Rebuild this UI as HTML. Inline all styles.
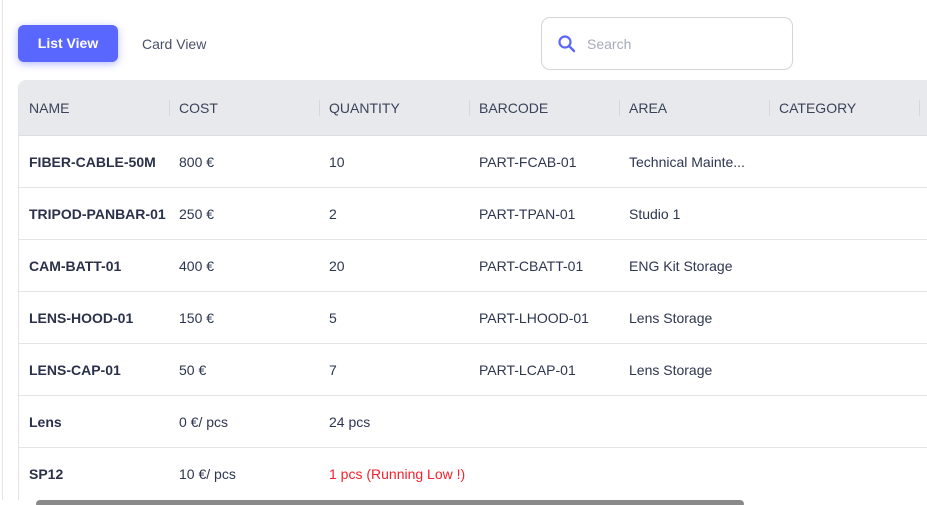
<!DOCTYPE html>
<html><head><meta charset="utf-8"><style>
*{box-sizing:border-box;margin:0;padding:0}
html,body{width:927px;height:505px;overflow:hidden}
body{background:#fff;font-family:"Liberation Sans",sans-serif;color:#2d3650;position:relative}
.frame{position:absolute;left:2px;top:-10px;width:920px;height:510px;border:1px solid #e6e7ea;border-right:none;border-bottom:none;border-radius:10px 0 0 0}
.btn{position:absolute;left:18px;top:25px;width:100px;height:37px;background:#5a67ff;border-radius:6px;color:#fff;font-weight:bold;font-size:14px;line-height:37px;text-align:center;box-shadow:0 2px 8px rgba(90,103,255,.45)}
.card{position:absolute;left:142px;top:36px;font-size:14px;color:#4a5068}
.search{position:absolute;left:541px;top:17px;width:252px;height:53px;border:1px solid #d4d5d9;border-radius:9px}
.search span{position:absolute;left:45px;top:18px;font-size:14px;color:#a8acb8}
.search svg{position:absolute;left:15px;top:16px}
.tbl{position:absolute;left:18px;top:80px;width:920px;border-top-left-radius:8px;overflow:hidden;border-left:1px solid #e3e4e8}
.hdr{height:56px;background:#e8e9ed;position:relative;border-bottom:1px solid #dcdde1}
.row{height:52px;position:relative;border-bottom:1px solid #e3e4e8;background:#fff}
.c{position:absolute;top:0;line-height:52px;font-size:14px;white-space:nowrap}
.hdr .c{line-height:56px;color:#3a4358}
.sep{position:absolute;top:20px;width:1px;height:16px;background:#d6d7db}
.b{font-weight:bold;color:#2a3149}
.red{color:#f5222d}
.sb{position:absolute;left:36px;top:500px;width:708px;height:8px;background:#8a8a8a;border-radius:4px}
</style></head><body>
<div class="frame"></div>
<div class="btn">List View</div>
<div class="card">Card View</div>
<div class="search"><svg width="20" height="20" viewBox="0 0 20 20"><circle cx="8" cy="8" r="5.5" fill="none" stroke="#5a67ff" stroke-width="2.2"/><line x1="12" y1="12" x2="17" y2="17" stroke="#5a67ff" stroke-width="2.4" stroke-linecap="round"/></svg><span>Search</span></div>
<div class="tbl">
<div class="hdr">
<div class="c" style="left:10px">NAME</div><div class="sep" style="left:150px"></div>
<div class="c" style="left:160px">COST</div><div class="sep" style="left:300px"></div>
<div class="c" style="left:310px">QUANTITY</div><div class="sep" style="left:450px"></div>
<div class="c" style="left:460px">BARCODE</div><div class="sep" style="left:600px"></div>
<div class="c" style="left:610px">AREA</div><div class="sep" style="left:750px"></div>
<div class="c" style="left:760px">CATEGORY</div><div class="sep" style="left:900px"></div>
</div>
<div class="row"><div class="c b" style="left:10px">FIBER-CABLE-50M</div><div class="c" style="left:160px">800 €</div><div class="c" style="left:310px">10</div><div class="c" style="left:460px">PART-FCAB-01</div><div class="c" style="left:610px">Technical Mainte...</div></div>
<div class="row"><div class="c b" style="left:10px">TRIPOD-PANBAR-01</div><div class="c" style="left:160px">250 €</div><div class="c" style="left:310px">2</div><div class="c" style="left:460px">PART-TPAN-01</div><div class="c" style="left:610px">Studio 1</div></div>
<div class="row"><div class="c b" style="left:10px">CAM-BATT-01</div><div class="c" style="left:160px">400 €</div><div class="c" style="left:310px">20</div><div class="c" style="left:460px">PART-CBATT-01</div><div class="c" style="left:610px">ENG Kit Storage</div></div>
<div class="row"><div class="c b" style="left:10px">LENS-HOOD-01</div><div class="c" style="left:160px">150 €</div><div class="c" style="left:310px">5</div><div class="c" style="left:460px">PART-LHOOD-01</div><div class="c" style="left:610px">Lens Storage</div></div>
<div class="row"><div class="c b" style="left:10px">LENS-CAP-01</div><div class="c" style="left:160px">50 €</div><div class="c" style="left:310px">7</div><div class="c" style="left:460px">PART-LCAP-01</div><div class="c" style="left:610px">Lens Storage</div></div>
<div class="row"><div class="c b" style="left:10px">Lens</div><div class="c" style="left:160px">0 €/ pcs</div><div class="c" style="left:310px">24 pcs</div></div>
<div class="row" style="border-bottom:none"><div class="c b" style="left:10px">SP12</div><div class="c" style="left:160px">10 €/ pcs</div><div class="c red" style="left:310px">1 pcs (Running Low !)</div></div>
</div>
<div class="sb"></div>
</body></html>
